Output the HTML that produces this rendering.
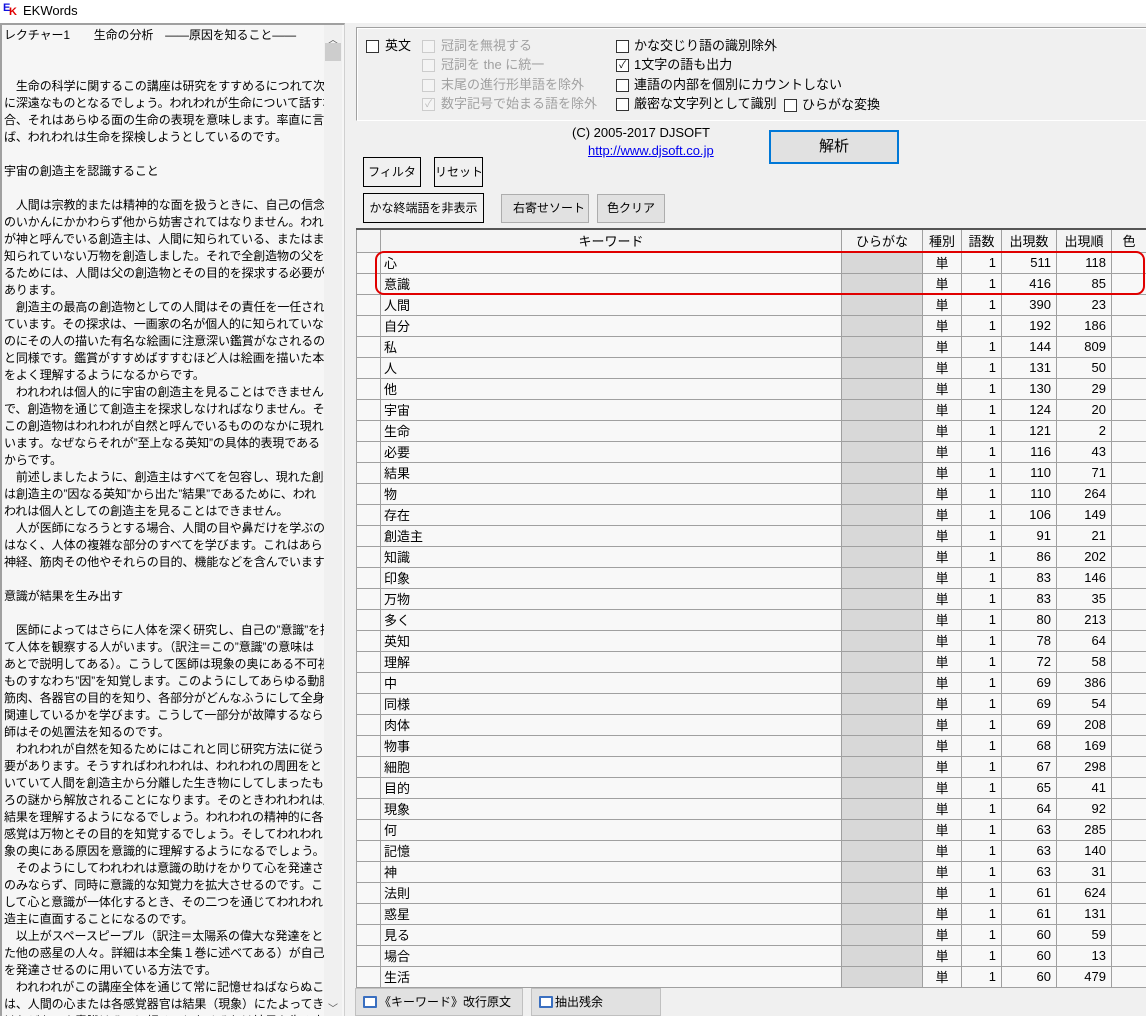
<!DOCTYPE html>
<html><head><meta charset="utf-8"><style>
*{margin:0;padding:0;box-sizing:border-box}
body{width:1146px;height:1016px;overflow:hidden;background:#f0f0f0;font-family:"Liberation Sans","Noto Sans CJK JP",sans-serif;font-size:13px;color:#000;position:relative}
.a{position:absolute}
#title{left:0;top:0;width:1146px;height:23px;background:#fff}
#left{left:0;top:23px;width:345px;height:993px;background:#f6f6f6;border-top:2px solid #a0a0a0;border-left:2px solid #a0a0a0;border-right:1px solid #d0d0d0;overflow:hidden}
#txt{position:absolute;left:2px;top:2px;width:322px;overflow:hidden;line-height:17px;font-size:12px;white-space:pre;letter-spacing:-0.1px}
#sb{right:2px;top:0;width:18px;height:993px;background:#f0f0f0}
.cb{position:absolute;width:13px;height:13px;border:1px solid #333;background:#fff}
.cb.d{border-color:#ccc;background:#f4f4f4}
.lbl{position:absolute;font-size:13px;line-height:16px}
.dis{color:#a0a0a0}
.btn{position:absolute;border:1px solid #000;background:#f0f0f0;text-align:center;font-size:12px;white-space:nowrap}
.btn.g{border-color:#adadad;background:#e1e1e1}
table{position:absolute;left:356px;top:228px;border-collapse:collapse;table-layout:fixed;width:790px;border-top:2px solid #555;border-left:1px solid #555}
td,th{border:1px solid #a0a0a0;height:21px;font-size:13px;font-weight:normal;padding:0 3px;background:#f8f8f8;white-space:nowrap;overflow:hidden}
th{height:23px;text-align:center;background:#f4f4f4}
td.h{background:#d8d8d8}
td.r{text-align:right;padding-right:5px}
td.c{text-align:center}
.tab{position:absolute;top:988px;height:28px;background:#e1e1e1;border:1px solid #c0c0c0;font-size:12px;line-height:26px;white-space:nowrap}
.ic{display:inline-block;width:14px;height:12px;border:2px solid #3a6fc0;border-radius:1px;background:#fff;vertical-align:-2px;margin:0 2px 0 7px}
</style></head><body>
<div id="title" class="a">
<span class="a" style="left:3px;top:2px;font-weight:bold;font-size:11px;color:#1010e0">E</span><span class="a" style="left:9px;top:6px;font-weight:bold;font-size:11px;color:#e00000">K</span>
<span class="a" style="left:23px;top:3px;font-size:13px">EKWords</span>
</div>
<div id="left" class="a">
<div id="txt">レクチャー1　　生命の分析　——原因を知ること——


　生命の科学に関するこの講座は研究をすすめるにつれて次第
に深遠なものとなるでしょう。われわれが生命について話す場
合、それはあらゆる面の生命の表現を意味します。率直に言え
ば、われわれは生命を探検しようとしているのです。

宇宙の創造主を認識すること

　人間は宗教的または精神的な面を扱うときに、自己の信念
のいかんにかかわらず他から妨害されてはなりません。われわれ
が神と呼んでいる創造主は、人間に知られている、またはまだ
知られていない万物を創造しました。それで全創造物の父を知
るためには、人間は父の創造物とその目的を探求する必要が
あります。
　創造主の最高の創造物としての人間はその責任を一任され
ています。その探求は、一画家の名が個人的に知られていない
のにその人の描いた有名な絵画に注意深い鑑賞がなされるの
と同様です。鑑賞がすすめばすすむほど人は絵画を描いた本人
をよく理解するようになるからです。
　われわれは個人的に宇宙の創造主を見ることはできませんの
で、創造物を通じて創造主を探求しなければなりません。そして
この創造物はわれわれが自然と呼んでいるもののなかに現れて
います。なぜならそれが”至上なる英知”の具体的表現である
からです。
　前述しましたように、創造主はすべてを包容し、現れた創造物
は創造主の”因なる英知”から出た”結果”であるために、われ
われは個人としての創造主を見ることはできません。
　人が医師になろうとする場合、人間の目や鼻だけを学ぶので
はなく、人体の複雑な部分のすべてを学びます。これはあらゆる
神経、筋肉その他やそれらの目的、機能などを含んでいます。

意識が結果を生み出す

　医師によってはさらに人体を深く研究し、自己の”意識”を持っ
て人体を観察する人がいます。（訳注＝この”意識”の意味は
あとで説明してある）。こうして医師は現象の奥にある不可視な
ものすなわち”因”を知覚します。このようにしてあらゆる動脈、
筋肉、各器官の目的を知り、各部分がどんなふうにして全身に
関連しているかを学びます。こうして一部分が故障するならば医
師はその処置法を知るのです。
　われわれが自然を知るためにはこれと同じ研究方法に従う必
要があります。そうすればわれわれは、われわれの周囲をとりま
いていて人間を創造主から分離した生き物にしてしまったもろも
ろの謎から解放されることになります。そのときわれわれは原因と
結果を理解するようになるでしょう。われわれの精神的に各種の
感覚は万物とその目的を知覚するでしょう。そしてわれわれは現
象の奥にある原因を意識的に理解するようになるでしょう。
　そのようにしてわれわれは意識の助けをかりて心を発達させる
のみならず、同時に意識的な知覚力を拡大させるのです。こう
して心と意識が一体化するとき、その二つを通じてわれわれは創
造主に直面することになるのです。
　以上がスペースピープル（訳注＝太陽系の偉大な発達をとげ
た他の惑星の人々。詳細は本全集１巻に述べてある）が自己
を発達させるのに用いている方法です。
　われわれがこの講座全体を通じて常に記憶せねばならぬこと
は、人間の心または各感覚器官は結果（現象）にたよってきた
けれども、人意識はそこに頼ることなくそれは結果を生み出す</div>
<div id="sb" class="a"><div class="a" style="left:4px;top:6px;font-size:10px;color:#555">︿</div><div class="a" style="left:1px;top:18px;width:16px;height:18px;background:#cdcdcd"></div><div class="a" style="left:4px;top:975px;font-size:10px;color:#555">﹀</div></div>
</div>

<div class="a" style="left:356px;top:27px;width:790px;height:94px;border:1px solid #a0a0a0;border-right:none;border-bottom-color:#fff;box-shadow:inset 1px 1px 0 #fff"></div>
<div class="cb" style="left:366px;top:40px"></div><div class="lbl" style="left:385px;top:38px">英文</div>
<div class="cb d" style="left:422px;top:40px"></div><div class="lbl dis" style="left:441px;top:38px">冠詞を無視する</div>
<div class="cb d" style="left:422px;top:59px"></div><div class="lbl dis" style="left:441px;top:57px">冠詞を the に統一</div>
<div class="cb d" style="left:422px;top:79px"></div><div class="lbl dis" style="left:441px;top:77px">末尾の進行形単語を除外</div>
<div class="cb d" style="left:422px;top:98px;color:#bbb;font-size:10px;line-height:11px;text-align:center">✓</div><div class="lbl dis" style="left:441px;top:96px">数字記号で始まる語を除外</div>
<div class="cb" style="left:616px;top:40px"></div><div class="lbl" style="left:634px;top:38px">かな交じり語の識別除外</div>
<div class="cb" style="left:616px;top:59px;font-size:10px;line-height:11px;text-align:center">✓</div><div class="lbl" style="left:634px;top:57px">1文字の語も出力</div>
<div class="cb" style="left:616px;top:79px"></div><div class="lbl" style="left:634px;top:77px">連語の内部を個別にカウントしない</div>
<div class="cb" style="left:616px;top:98px"></div><div class="lbl" style="left:634px;top:96px">厳密な文字列として識別</div>
<div class="cb" style="left:784px;top:99px"></div><div class="lbl" style="left:802px;top:97px">ひらがな変換</div>
<div class="lbl" style="left:572px;top:125px">(C) 2005-2017 DJSOFT</div>
<div class="lbl" style="left:588px;top:143px;color:#0000ee;text-decoration:underline">http://www.djsoft.co.jp</div>
<div class="btn" style="left:769px;top:130px;width:130px;height:34px;border:2px solid #0078d7;background:#e1e1e1;font-size:15px;line-height:30px">解析</div>
<div class="btn" style="left:363px;top:157px;width:58px;height:30px;line-height:28px">フィルタ</div>
<div class="btn" style="left:434px;top:157px;width:49px;height:30px;line-height:28px">リセット</div>
<div class="btn" style="left:363px;top:193px;width:121px;height:30px;line-height:28px">かな終端語を非表示</div>
<div class="btn g" style="left:501px;top:194px;width:88px;height:29px;line-height:27px;padding-left:8px">右寄せソート</div>
<div class="btn g" style="left:597px;top:194px;width:68px;height:29px;line-height:27px">色クリア</div>

<table>
<colgroup><col style="width:24px"><col style="width:461px"><col style="width:81px"><col style="width:39px"><col style="width:40px"><col style="width:55px"><col style="width:55px"><col style="width:35px"></colgroup>
<tr><th></th><th>キーワード</th><th>ひらがな</th><th>種別</th><th>語数</th><th>出現数</th><th>出現順</th><th>色</th></tr>
<tr><td></td><td>心</td><td class="h"></td><td class="c">単</td><td class="r">1</td><td class="r">511</td><td class="r">118</td><td></td></tr>
<tr><td></td><td>意識</td><td class="h"></td><td class="c">単</td><td class="r">1</td><td class="r">416</td><td class="r">85</td><td></td></tr>
<tr><td></td><td>人間</td><td class="h"></td><td class="c">単</td><td class="r">1</td><td class="r">390</td><td class="r">23</td><td></td></tr>
<tr><td></td><td>自分</td><td class="h"></td><td class="c">単</td><td class="r">1</td><td class="r">192</td><td class="r">186</td><td></td></tr>
<tr><td></td><td>私</td><td class="h"></td><td class="c">単</td><td class="r">1</td><td class="r">144</td><td class="r">809</td><td></td></tr>
<tr><td></td><td>人</td><td class="h"></td><td class="c">単</td><td class="r">1</td><td class="r">131</td><td class="r">50</td><td></td></tr>
<tr><td></td><td>他</td><td class="h"></td><td class="c">単</td><td class="r">1</td><td class="r">130</td><td class="r">29</td><td></td></tr>
<tr><td></td><td>宇宙</td><td class="h"></td><td class="c">単</td><td class="r">1</td><td class="r">124</td><td class="r">20</td><td></td></tr>
<tr><td></td><td>生命</td><td class="h"></td><td class="c">単</td><td class="r">1</td><td class="r">121</td><td class="r">2</td><td></td></tr>
<tr><td></td><td>必要</td><td class="h"></td><td class="c">単</td><td class="r">1</td><td class="r">116</td><td class="r">43</td><td></td></tr>
<tr><td></td><td>結果</td><td class="h"></td><td class="c">単</td><td class="r">1</td><td class="r">110</td><td class="r">71</td><td></td></tr>
<tr><td></td><td>物</td><td class="h"></td><td class="c">単</td><td class="r">1</td><td class="r">110</td><td class="r">264</td><td></td></tr>
<tr><td></td><td>存在</td><td class="h"></td><td class="c">単</td><td class="r">1</td><td class="r">106</td><td class="r">149</td><td></td></tr>
<tr><td></td><td>創造主</td><td class="h"></td><td class="c">単</td><td class="r">1</td><td class="r">91</td><td class="r">21</td><td></td></tr>
<tr><td></td><td>知識</td><td class="h"></td><td class="c">単</td><td class="r">1</td><td class="r">86</td><td class="r">202</td><td></td></tr>
<tr><td></td><td>印象</td><td class="h"></td><td class="c">単</td><td class="r">1</td><td class="r">83</td><td class="r">146</td><td></td></tr>
<tr><td></td><td>万物</td><td class="h"></td><td class="c">単</td><td class="r">1</td><td class="r">83</td><td class="r">35</td><td></td></tr>
<tr><td></td><td>多く</td><td class="h"></td><td class="c">単</td><td class="r">1</td><td class="r">80</td><td class="r">213</td><td></td></tr>
<tr><td></td><td>英知</td><td class="h"></td><td class="c">単</td><td class="r">1</td><td class="r">78</td><td class="r">64</td><td></td></tr>
<tr><td></td><td>理解</td><td class="h"></td><td class="c">単</td><td class="r">1</td><td class="r">72</td><td class="r">58</td><td></td></tr>
<tr><td></td><td>中</td><td class="h"></td><td class="c">単</td><td class="r">1</td><td class="r">69</td><td class="r">386</td><td></td></tr>
<tr><td></td><td>同様</td><td class="h"></td><td class="c">単</td><td class="r">1</td><td class="r">69</td><td class="r">54</td><td></td></tr>
<tr><td></td><td>肉体</td><td class="h"></td><td class="c">単</td><td class="r">1</td><td class="r">69</td><td class="r">208</td><td></td></tr>
<tr><td></td><td>物事</td><td class="h"></td><td class="c">単</td><td class="r">1</td><td class="r">68</td><td class="r">169</td><td></td></tr>
<tr><td></td><td>細胞</td><td class="h"></td><td class="c">単</td><td class="r">1</td><td class="r">67</td><td class="r">298</td><td></td></tr>
<tr><td></td><td>目的</td><td class="h"></td><td class="c">単</td><td class="r">1</td><td class="r">65</td><td class="r">41</td><td></td></tr>
<tr><td></td><td>現象</td><td class="h"></td><td class="c">単</td><td class="r">1</td><td class="r">64</td><td class="r">92</td><td></td></tr>
<tr><td></td><td>何</td><td class="h"></td><td class="c">単</td><td class="r">1</td><td class="r">63</td><td class="r">285</td><td></td></tr>
<tr><td></td><td>記憶</td><td class="h"></td><td class="c">単</td><td class="r">1</td><td class="r">63</td><td class="r">140</td><td></td></tr>
<tr><td></td><td>神</td><td class="h"></td><td class="c">単</td><td class="r">1</td><td class="r">63</td><td class="r">31</td><td></td></tr>
<tr><td></td><td>法則</td><td class="h"></td><td class="c">単</td><td class="r">1</td><td class="r">61</td><td class="r">624</td><td></td></tr>
<tr><td></td><td>惑星</td><td class="h"></td><td class="c">単</td><td class="r">1</td><td class="r">61</td><td class="r">131</td><td></td></tr>
<tr><td></td><td>見る</td><td class="h"></td><td class="c">単</td><td class="r">1</td><td class="r">60</td><td class="r">59</td><td></td></tr>
<tr><td></td><td>場合</td><td class="h"></td><td class="c">単</td><td class="r">1</td><td class="r">60</td><td class="r">13</td><td></td></tr>
<tr><td></td><td>生活</td><td class="h"></td><td class="c">単</td><td class="r">1</td><td class="r">60</td><td class="r">479</td><td></td></tr>
</table>
<div class="a" style="left:375px;top:251px;width:770px;height:44px;border:2px solid #e00000;border-radius:9px"></div>

<div class="tab" style="left:355px;width:168px"><span class="ic"></span>《キーワード》改行原文</div>
<div class="tab" style="left:531px;width:130px"><span class="ic"></span>抽出残余</div>
</body></html>
